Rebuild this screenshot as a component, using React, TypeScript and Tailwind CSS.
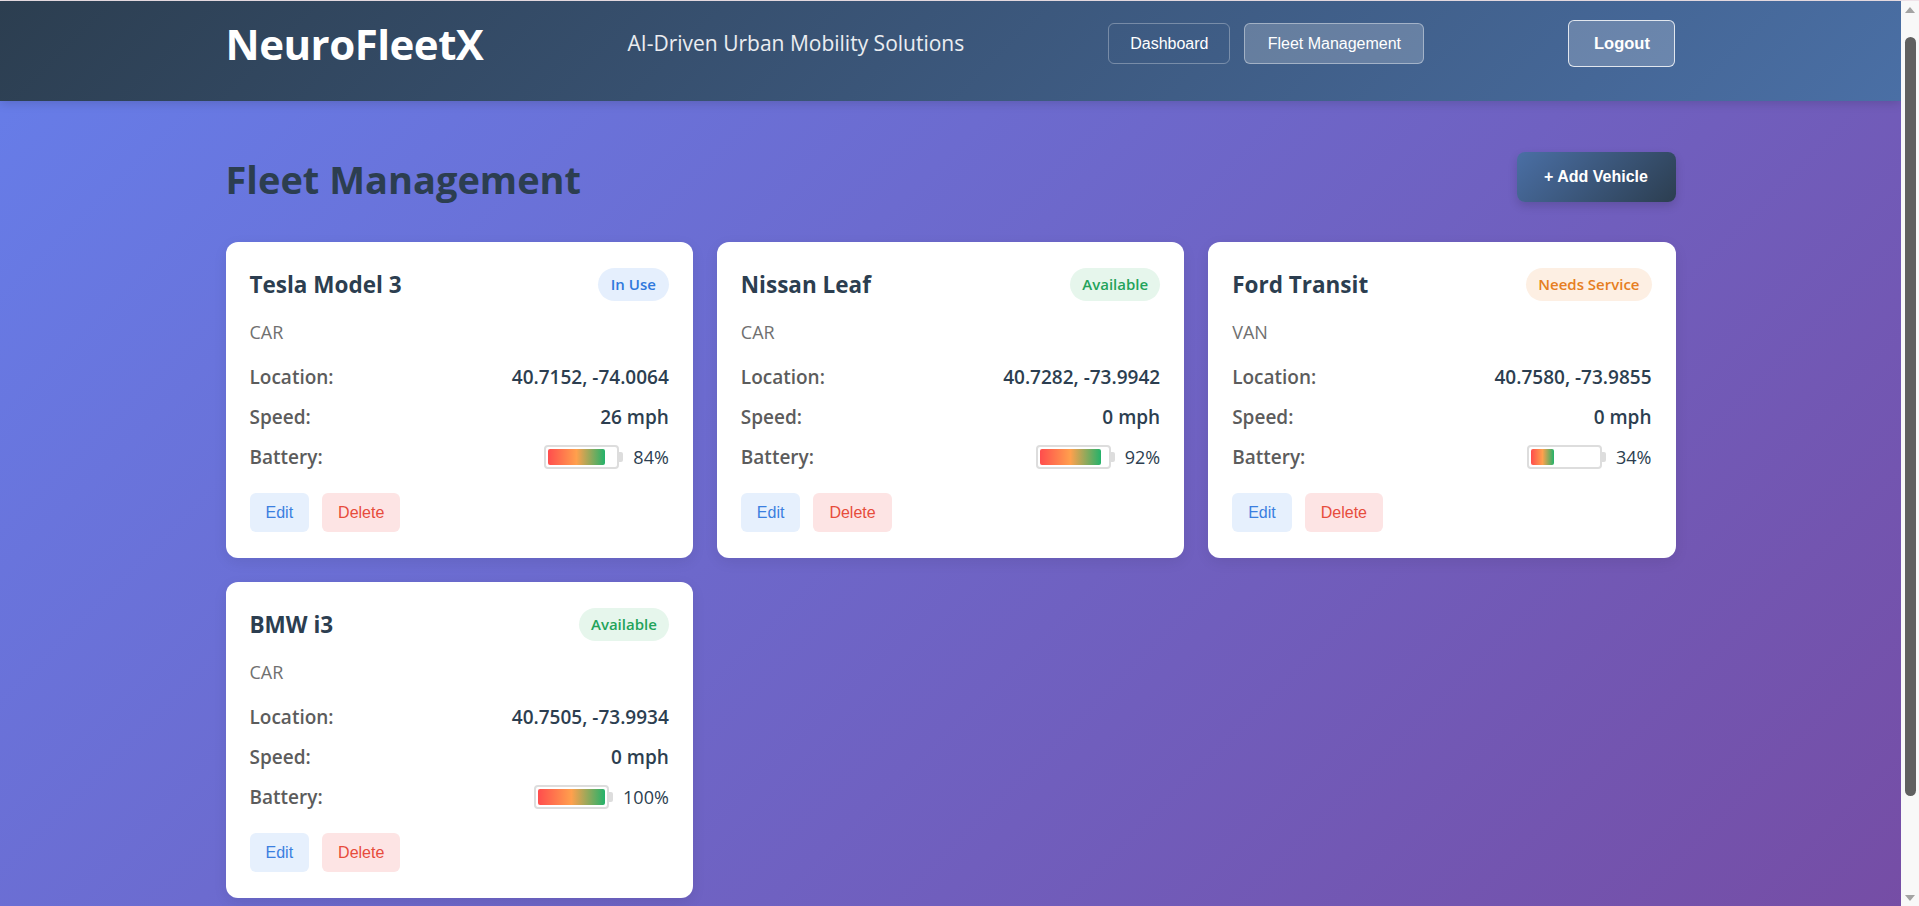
import React from "react";

type Vehicle = {
  name: string;
  type: string;
  status: "In Use" | "Available" | "Needs Service";
  location: string;
  speed: string;
  battery: number;
};

const vehicles: Vehicle[] = [
  { name: "Tesla Model 3", type: "CAR", status: "In Use", location: "40.7152, -74.0064", speed: "26 mph", battery: 84 },
  { name: "Nissan Leaf", type: "CAR", status: "Available", location: "40.7282, -73.9942", speed: "0 mph", battery: 92 },
  { name: "Ford Transit", type: "VAN", status: "Needs Service", location: "40.7580, -73.9855", speed: "0 mph", battery: 34 },
  { name: "BMW i3", type: "CAR", status: "Available", location: "40.7505, -73.9934", speed: "0 mph", battery: 100 },
];

function Badge({ status }: { status: Vehicle["status"] }) {
  if (status === "In Use")
    return (
      <span className="flex h-[33px] items-center rounded-full bg-[#e5effd] px-[13px] text-[15px] font-semibold text-[#2f78dc]">
        In Use
      </span>
    );
  if (status === "Available")
    return (
      <span className="flex h-[33px] items-center rounded-full bg-[#e6f6ec] px-[12px] text-[15px] font-semibold text-[#23a35a]">
        Available
      </span>
    );
  return (
    <span className="flex h-[33px] items-center rounded-full bg-[#fdefe3] px-[12px] text-[15px] font-semibold text-[#e67e22]">
      Needs Service
    </span>
  );
}

function Battery({ value }: { value: number }) {
  return (
    <div className="flex items-center">
      <div className="flex h-[24px] w-[75px] items-center rounded-[4px] border-2 border-[#dddddd] p-[2px]">
        <div
          className="h-full rounded-[2px] bg-[linear-gradient(90deg,#ff4d4d,#ffa04d,#23b26a)]"
          style={{ width: `${value}%` }}
        />
      </div>
      <div className="h-[10px] w-[4px] rounded-r-[2px] bg-[#dddddd]" />
      <span className="ml-[10px] text-[18px] font-medium text-[#2c3e50]">{value}%</span>
    </div>
  );
}

function Card({ v }: { v: Vehicle }) {
  return (
    <div className="rounded-xl bg-white px-6 pt-[26px] pb-[26px] shadow-[0_4px_14px_rgba(0,0,0,0.08)]">
      <div className="flex h-[33px] items-center justify-between">
        <h3 className="text-[22.5px] font-bold text-[#2c3e50]">{v.name}</h3>
        <Badge status={v.status} />
      </div>
      <div className="mt-[19px] h-[24px] text-[18px] leading-[24px] text-[#707070]">{v.type}</div>
      <div className="mt-[13px]">
        <div className="flex h-[40px] items-center justify-between">
          <span className="text-[19px] font-semibold text-[#5c5c5c]">Location:</span>
          <span className="text-[19px] font-semibold text-[#2c3e50]">{v.location}</span>
        </div>
        <div className="flex h-[40px] items-center justify-between">
          <span className="text-[19px] font-semibold text-[#5c5c5c]">Speed:</span>
          <span className="text-[19px] font-semibold text-[#2c3e50]">{v.speed}</span>
        </div>
        <div className="flex h-[40px] items-center justify-between">
          <span className="text-[19px] font-semibold text-[#5c5c5c]">Battery:</span>
          <Battery value={v.battery} />
        </div>
      </div>
      <div className="mt-[16px] flex gap-[13px] font-['Liberation_Sans',Arial,sans-serif]">
        <button className="flex h-[39px] items-center rounded-[6px] bg-[#e6f0fd] px-4 text-[16px] text-[#3b7fe0]">
          Edit
        </button>
        <button className="flex h-[39px] items-center rounded-[6px] bg-[#fde4e4] px-4 text-[16px] text-[#e74c3c]">
          Delete
        </button>
      </div>
    </div>
  );
}

function Scrollbar() {
  return (
    <div className="sticky top-0 flex h-screen w-[18px] shrink-0 flex-col items-center bg-[#f8f8f8]">
      <div className="flex h-[18px] items-center justify-center">
        <svg width="10" height="6" viewBox="0 0 10 6">
          <path d="M0 6 L5 0 L10 6 Z" fill="#a3a3a3" />
        </svg>
      </div>
      <div className="mt-[18px] h-[759px] w-[11px] rounded-full bg-[#606060]" />
      <div className="flex-1" />
      <div className="flex h-[18px] items-center justify-center">
        <svg width="10" height="6" viewBox="0 0 10 6">
          <path d="M0 0 L10 0 L5 6 Z" fill="#a3a3a3" />
        </svg>
      </div>
    </div>
  );
}

export default function App() {
  return (
    <div className="flex border-t border-[#efe3e9] font-['Open_Sans','Noto_Sans',sans-serif]">
      <div className="w-[1901px] shrink-0 bg-[linear-gradient(135deg,#667eea_0%,#764ba2_100%)]">
        <header className="h-[100px] bg-[linear-gradient(135deg,#2c3e50_0%,#4a6fa5_100%)] shadow-[0_2px_10px_rgba(0,0,0,0.15)]">
          <div className="mx-auto flex h-[85px] w-[1450px] items-center justify-between">
            <h1 className="text-[42px] font-bold tracking-[-0.5px] text-white">NeuroFleetX</h1>
            <p className="text-[21px] text-white/90">AI-Driven Urban Mobility Solutions</p>
            <nav className="flex gap-[14px] font-['Liberation_Sans',Arial,sans-serif]">
              <button className="flex h-[41px] w-[122px] items-center justify-center rounded-[6px] border border-white/30 text-[16px] text-white">
                Dashboard
              </button>
              <button className="flex h-[41px] w-[180px] items-center justify-center rounded-[6px] border border-white/40 bg-white/20 text-[16px] text-white">
                Fleet Management
              </button>
            </nav>
            <button className="flex h-[47px] w-[107px] items-center justify-center rounded-[6px] border border-white/80 bg-white/20 font-['Liberation_Sans',Arial,sans-serif] text-[16.5px] font-bold text-white">
              Logout
            </button>
          </div>
        </header>
        <main className="mx-auto w-[1450px] pb-[135px]">
          <div className="flex h-[141px] items-center justify-between pt-[16px]">
            <h2 className="text-[38px] font-bold text-[#2c3e50]">Fleet Management</h2>
            <button className="mb-[5px] flex h-[50px] w-[159px] items-center justify-center rounded-[8px] bg-[linear-gradient(135deg,#4a6fa5,#2c3e50)] font-['Liberation_Sans',Arial,sans-serif] text-[16px] font-bold text-white shadow-[0_4px_10px_rgba(0,0,0,0.15)]">
              + Add Vehicle
            </button>
          </div>
          <div className="grid grid-cols-3 gap-6">
            {vehicles.map((v) => (
              <Card key={v.name} v={v} />
            ))}
          </div>
        </main>
      </div>
      <Scrollbar />
    </div>
  );
}
